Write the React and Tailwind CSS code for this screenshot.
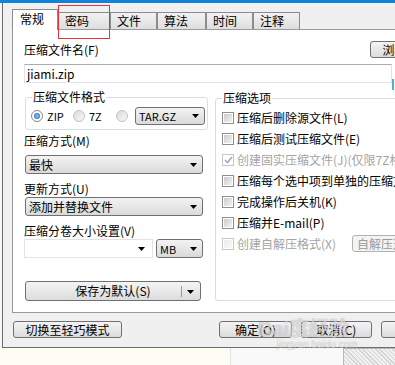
import React from "react";

const Arrow = () => (
  <svg width="7" height="4" viewBox="0 0 7 4" className="shrink-0">
    <path d="M0 0h7L3.5 4z" fill="#000" />
  </svg>
);

const Select = ({ value, className = "", mono = false }) => (
  <div
    className={`flex items-center justify-between h-[19px] pl-[3px] pr-[5px] border border-[#707070] rounded-[3px] bg-linear-to-b from-[#f3f3f3] to-[#dadada] ${className}`}
  >
    <span className={mono ? "text-[11px]" : ""}>{value}</span>
    <Arrow />
  </div>
);

const Button = ({ children, className = "", disabled = false }) => (
  <div
    className={`flex items-center justify-center shrink-0 rounded-[3px] border bg-linear-to-b ${
      disabled
        ? "border-[#adb2b5] from-[#f4f4f4] to-[#f4f4f4] text-[#9a9a9a]"
        : "border-[#707070] from-[#f4f4f4] to-[#dcdcdc]"
    } ${className}`}
  >
    {children}
  </div>
);

const Radio = ({ on }) => (
  <span
    className={`flex items-center justify-center shrink-0 w-[12px] h-[12px] rounded-full border ${
      on ? "border-[#8a8a8a] bg-white" : "border-[#c2c2c2] bg-linear-to-br from-[#d9d9d9] to-[#fafafa]"
    }`}
  >
    {on && <span className="w-[6px] h-[6px] rounded-full bg-radial from-[#8fd0ff] to-[#0b58a8]" />}
  </span>
);

const Check = ({ label, checked = false, disabled = false, children }) => (
  <div className="flex items-center h-[21px] whitespace-nowrap">
    <span
      className={`flex items-center justify-center shrink-0 w-[12px] h-[12px] border bg-white ${
        disabled ? "border-[#c6c6c6]" : "border-[#8e8f8f]"
      }`}
    >
      {checked ? (
        <svg width="9" height="8" viewBox="0 0 9 8">
          <path d="M1 4l2.5 2.5L8 1" fill="none" stroke="#a8a8a8" strokeWidth="1.6" />
        </svg>
      ) : (
        <span
          className={`w-[8px] h-[8px] bg-linear-to-br ${
            disabled ? "from-[#ececec] to-[#f8f8f8]" : "from-[#cbcbcb] to-[#f3f3f3]"
          }`}
        />
      )}
    </span>
    <span className={`ml-[3px] ${disabled ? "text-[#a3a3a3]" : ""}`}>{label}</span>
    {children}
  </div>
);

const Tab = ({ label, w }) => (
  <div
    className={`flex items-center h-[17px] pl-[6px] border border-b-0 border-[#8c8c8c] bg-linear-to-b from-[#f2f2f2] to-[#dedede] ${w}`}
  >
    {label}
  </div>
);

export default function App() {
  return (
    <div className="relative w-[395px] h-[365px] overflow-hidden bg-[#fdfdf3] text-[12px] leading-[14px] text-black font-['Noto_Sans_CJK_SC','Noto_Sans',sans-serif]">
      <div className="h-[3px] bg-[#1383d8]" />

      <div className="flex h-[345px]">
        <div className="w-[2px] bg-[#f6f6f6]" />

        {/* DIALOG */}
        <div className="flex-1 min-w-0 flex flex-col bg-[#f0f0f0] border-l border-b border-[#6d6d6d] overflow-hidden">
          {/* TABS */}
          <div className="flex items-end h-[26px] pl-[9px] shrink-0">
            <div className="relative z-10 -mb-px flex items-center w-[46px] h-[21px] pl-[7px] pb-[2px] bg-white border border-b-0 border-[#8c8c8c]">
              常规
            </div>
            <Tab label="密码" w="w-[52px]" />
            <Tab label="文件" w="w-[47px]" />
            <Tab label="算法" w="w-[49px]" />
            <Tab label="时间" w="w-[47px]" />
            <Tab label="注释" w="w-[47px]" />
          </div>

          {/* PANEL */}
          <div className="relative ml-[9px] h-[284px] shrink-0 bg-white border-t border-l border-b border-[#9a9a9a] overflow-hidden pl-[11px] pt-[11px]">
            <div className="flex items-center h-[17px]">
              <span className="w-[346px] shrink-0">压缩文件名(F)</span>
              <Button className="w-[75px] h-[17px]">浏览(B)...</Button>
            </div>

            <div className="mt-[6px] w-[368px] h-[19px] flex items-center pl-[2px] border border-[#e2e3ea] border-t-[#abadb3]">
              jiami.zip
            </div>

            <div className="flex mt-[14px]">
              {/* LEFT COLUMN */}
              <div className="w-[184px] shrink-0">
                <div className="relative ml-[1px] w-[183px] h-[33px] border border-[#d5dfe5] rounded-[3px] pt-[9px]">
                  <span className="absolute -top-[8px] left-[6px] px-[1px] bg-white">压缩文件格式</span>
                  <div className="flex items-center h-[18px] pl-[5px]">
                    <Radio on />
                    <span className="ml-[4px] w-[26px] text-[11px]">ZIP</span>
                    <Radio />
                    <span className="ml-[4px] w-[27px] text-[11px]">7Z</span>
                    <Radio />
                    <Select value="TAR.GZ" mono className="ml-[7px] w-[70px] !h-[18px]" />
                  </div>
                </div>

                <div className="mt-[4px] h-[14px]">压缩方式(M)</div>
                <Select value="最快" className="mt-[7px] ml-[1px] w-[178px]" />

                <div className="mt-[8px] h-[14px]">更新方式(U)</div>
                <Select value="添加并替换文件" className="mt-[1px] ml-[1px] w-[178px]" />

                <div className="mt-[8px] h-[14px]">压缩分卷大小设置(V)</div>
                <div className="flex mt-[1px]">
                  <div className="flex items-center justify-end w-[129px] h-[19px] pr-[7px] border border-[#e3e3e3]">
                    <Arrow />
                  </div>
                  <Select value="MB" mono className="ml-[3px] w-[47px]" />
                </div>

                <Button className="relative mt-[23px] ml-[1px] w-[176px] h-[20px]">
                  保存为默认(S)
                  <span className="absolute right-[18px] top-[4px] w-px h-[11px] bg-[#9a9a9a]" />
                  <span className="absolute right-[6px] top-[8px]">
                    <Arrow />
                  </span>
                </Button>
              </div>

              {/* RIGHT COLUMN */}
              <div className="relative ml-[7px] mt-[1px] w-[250px] h-[203px] shrink-0 border border-[#d5dfe5] rounded-[3px] pl-[6px] pt-[8px]">
                <span className="absolute -top-[8px] left-[6px] px-[1px] bg-white">压缩选项</span>
                <Check label="压缩后删除源文件(L)" />
                <Check label="压缩后测试压缩文件(E)" />
                <Check label="创建固实压缩文件(J)(仅限7Z格式)" checked disabled />
                <Check label="压缩每个选中项到单独的压缩文件(A)" />
                <Check label="完成操作后关机(K)" />
                <Check label="压缩并E-mail(P)" />
                <div className="flex items-center h-[21px] whitespace-nowrap">
                  <span className="flex items-center justify-center shrink-0 w-[12px] h-[12px] border border-[#c6c6c6] bg-white">
                    <span className="w-[8px] h-[8px] bg-linear-to-br from-[#ececec] to-[#f8f8f8]" />
                  </span>
                  <span className="ml-[3px] w-[115px] shrink-0 text-[#a3a3a3]">创建自解压格式(X)</span>
                  <Button disabled className="w-[90px] h-[17px] !justify-start pl-[4px]">
                    自解压选项(O)
                  </Button>
                </div>
              </div>
            </div>

            <span className="absolute left-[379px] top-[49px] w-[2px] h-[11px] bg-[#4fb3bf]" />
          </div>

          {/* BOTTOM BUTTONS */}
          <div className="flex pt-[8px] pl-[10px]">
            <Button className="w-[109px] h-[17px]">切换至轻巧模式</Button>
            <Button className="ml-[97px] w-[73px] h-[17px]">确定(O)</Button>
            <Button className="ml-[9px] w-[71px] h-[17px]">取消(C)</Button>
            <Button className="ml-[9px] w-[73px] h-[17px]">帮助</Button>
          </div>
        </div>
      </div>

      {/* AREA UNDER DIALOG */}
      <div className="flex h-[17px]">
        <div className="w-[230px] bg-[#fdfdf3]" />
        <div className="w-[113px] bg-[#f9f9f9] border-l border-[#e2e2e2]" />
        <div className="flex-1 border-l border-t border-[#b9b9b9] bg-[repeating-linear-gradient(45deg,#d4d4d4_0,#d4d4d4_1px,#f0f0f0_1px,#f0f0f0_3px)]" />
      </div>

      {/* ANNOTATION */}
      <div className="absolute left-[58px] top-[5px] w-[52px] h-[34px] border border-[#e8313a]" />

      {/* WATERMARK */}
      <div className="absolute left-[258px] top-[318px] text-[20px] leading-[22px] font-bold text-white/60 [text-shadow:0_0_1px_rgba(0,0,0,0.35)] font-['Liberation_Sans','Noto_Sans_CJK_SC',sans-serif]">
        Bai度经验
      </div>
      <div className="absolute left-[277px] top-[340px] text-[10px] leading-[10px] text-white/60 [text-shadow:0_0_1px_rgba(0,0,0,0.3)] font-['Liberation_Sans',sans-serif]">
        jingyan.baidu.com
      </div>
    </div>
  );
}
